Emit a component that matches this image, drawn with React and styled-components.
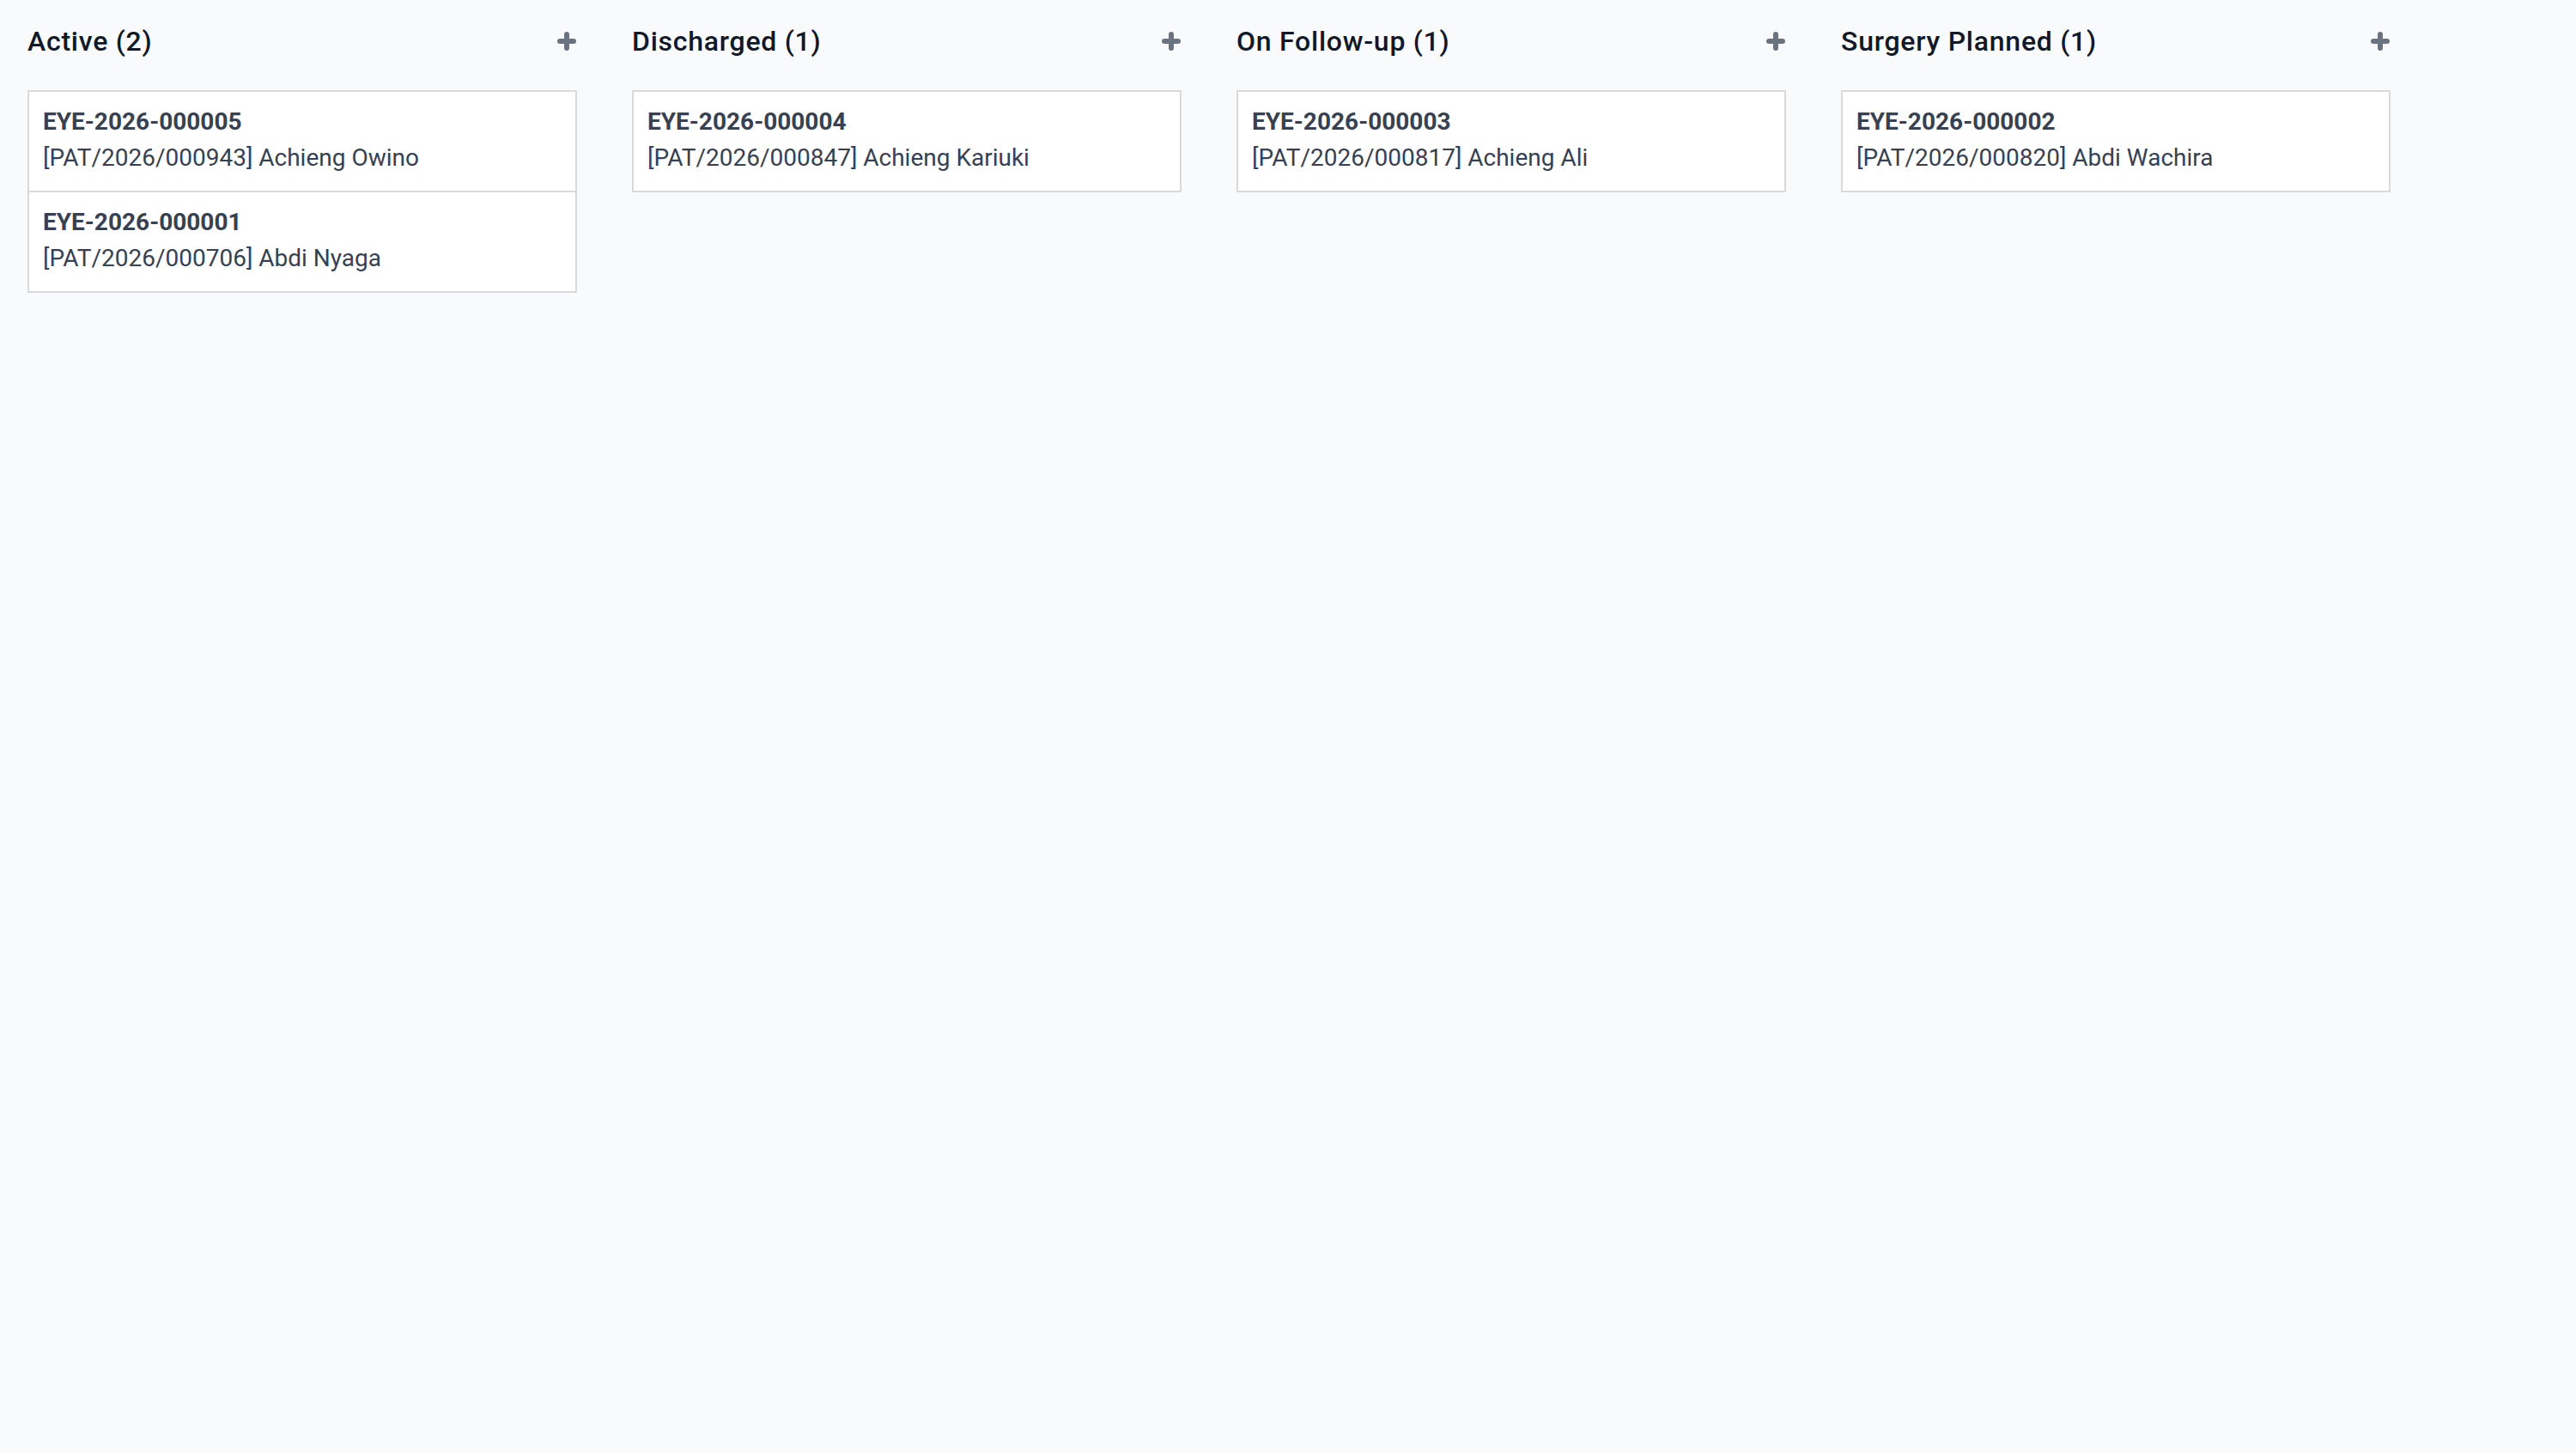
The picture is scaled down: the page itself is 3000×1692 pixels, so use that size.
import React from 'react';
import styled, { createGlobalStyle } from 'styled-components';

const GlobalStyle = createGlobalStyle`
  html, body {
    margin: 0;
    padding: 0;
    background: #f9fafb;
  }
  body {
    font-family: Roboto, "Noto Sans", "Liberation Sans", sans-serif;
    min-height: 1692px;
  }
`;

const Board = styled.div`
  display: flex;
  align-items: flex-start;
  gap: 64px;
  padding: 24px 32px;
`;

const Column = styled.div`
  display: flex;
  flex-direction: column;
  width: 640px;
`;

const ColumnHeader = styled.div`
  display: flex;
  align-items: center;
  justify-content: space-between;
  height: 48px;
  margin-bottom: 33px;
`;

const ColumnTitle = styled.h2`
  margin: 0;
  font-size: 32px;
  line-height: 48px;
  font-weight: 500;
  letter-spacing: 0.75px;
  color: #111827;
`;

const AddButton = styled.button`
  display: flex;
  align-items: center;
  justify-content: center;
  width: 22px;
  height: 22px;
  margin-right: 1px;
  padding: 0;
  border: none;
  background: transparent;
  color: #6b7280;
  cursor: pointer;
`;

const CardList = styled.div`
  display: flex;
  flex-direction: column;
`;

const Card = styled.div`
  background: #ffffff;
  border: 2px solid #dadada;
  padding: 14px 16px 17px;
  & + & {
    margin-top: -2px;
  }
`;

const CardId = styled.div`
  font-size: 28px;
  line-height: 42px;
  font-weight: 700;
  color: #374151;
`;

const CardPatient = styled.div`
  font-size: 28px;
  line-height: 42px;
  font-weight: 400;
  color: #374151;
`;

const PlusIcon = () => (
  <svg width="22" height="22" viewBox="0 0 22 22" fill="none">
    <path d="M11 3v16M3 11h16" stroke="currentColor" strokeWidth="6" strokeLinecap="round" />
  </svg>
);

const columns = [
  {
    title: 'Active',
    cards: [
      { id: 'EYE-2026-000005', patient: '[PAT/2026/000943] Achieng Owino' },
      { id: 'EYE-2026-000001', patient: '[PAT/2026/000706] Abdi Nyaga' },
    ],
  },
  {
    title: 'Discharged',
    cards: [{ id: 'EYE-2026-000004', patient: '[PAT/2026/000847] Achieng Kariuki' }],
  },
  {
    title: 'On Follow-up',
    cards: [{ id: 'EYE-2026-000003', patient: '[PAT/2026/000817] Achieng Ali' }],
  },
  {
    title: 'Surgery Planned',
    cards: [{ id: 'EYE-2026-000002', patient: '[PAT/2026/000820] Abdi Wachira' }],
  },
];

const App = () => {
  return (
    <>
      <GlobalStyle />
      <Board>
        {columns.map((col) => (
          <Column key={col.title}>
            <ColumnHeader>
              <ColumnTitle>
                {col.title} ({col.cards.length})
              </ColumnTitle>
              <AddButton>
                <PlusIcon />
              </AddButton>
            </ColumnHeader>
            <CardList>
              {col.cards.map((card) => (
                <Card key={card.id}>
                  <CardId>{card.id}</CardId>
                  <CardPatient>{card.patient}</CardPatient>
                </Card>
              ))}
            </CardList>
          </Column>
        ))}
      </Board>
    </>
  );
};

export default App;
